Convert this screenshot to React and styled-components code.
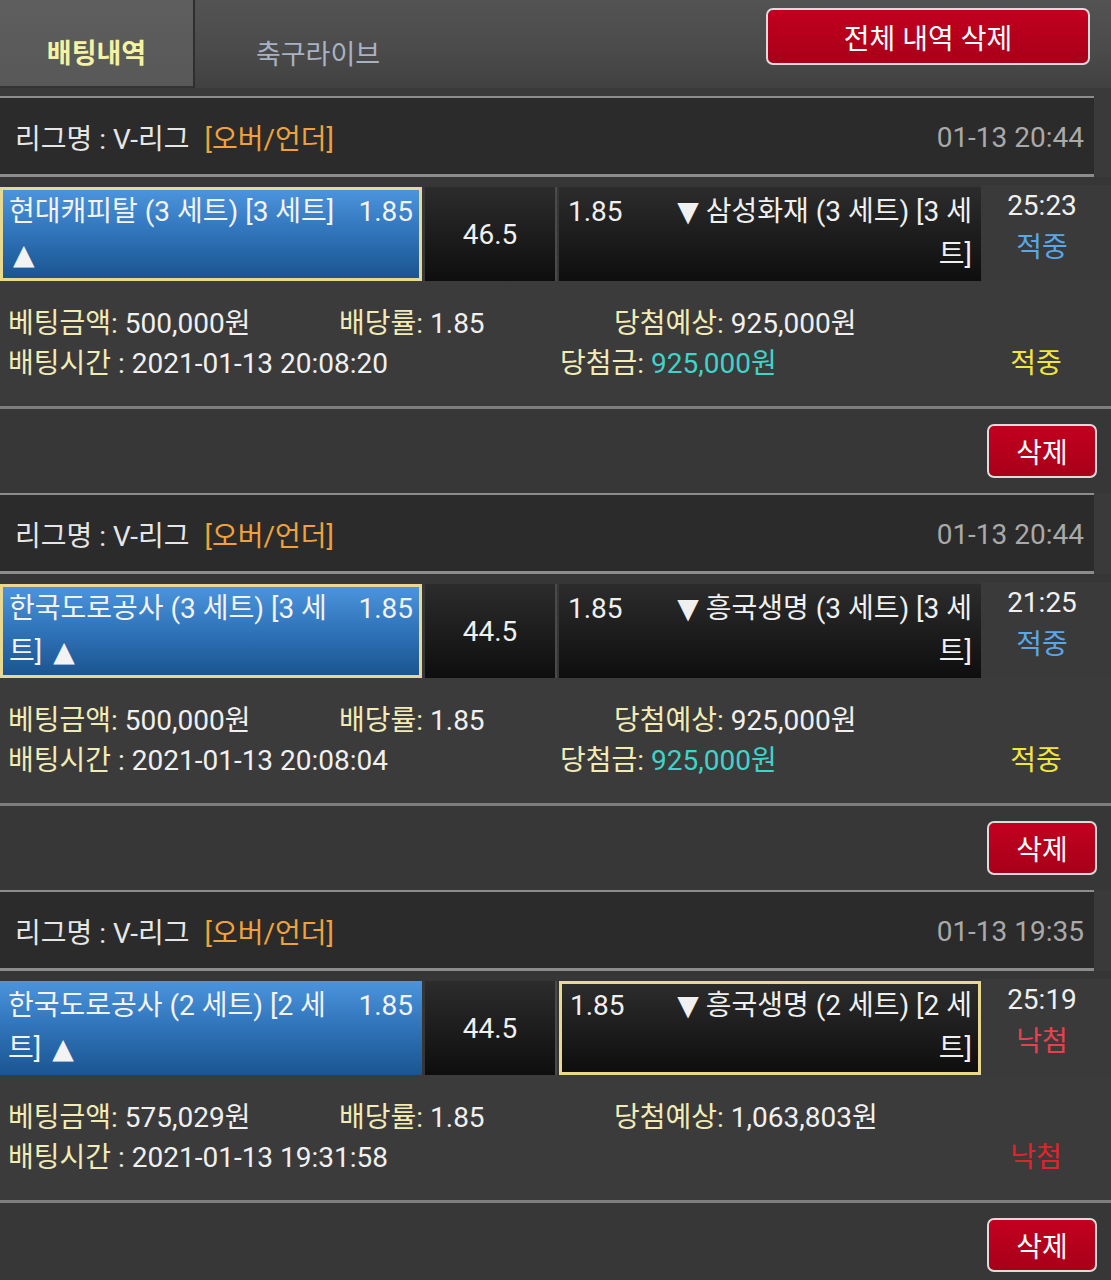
import React from 'react';
import styled, { createGlobalStyle } from 'styled-components';

const GlobalStyle = createGlobalStyle`
  html, body { margin: 0; padding: 0; background: #3a3a3a; }
  body { font-family: Roboto, "Noto Sans CJK KR", sans-serif; }
  * { box-sizing: border-box; }
`;

const Page = styled.div`
  width: 1111px;
  min-height: 1280px;
  background: #3a3a3a;
  overflow: hidden;
`;

const TabBar = styled.div`
  height: 88px;
  display: flex;
  align-items: stretch;
  background: linear-gradient(#535353, #4b4b4b 55%, #414141);
  margin-bottom: 8px;
`;

const Tab = styled.div`
  width: ${p => p.$w}px;
  display: flex;
  align-items: center;
  justify-content: center;
  padding-top: 16px;
  font-size: 27px;
  font-weight: ${p => (p.$active ? 700 : 400)};
  color: ${p => (p.$active ? '#f4f3a2' : '#a9b2c2')};
  background: ${p => (p.$active ? 'linear-gradient(#5e5e5e, #585858)' : 'transparent')};
  border-right: ${p => (p.$active ? '2px solid #2f2f2f' : '0')};
  border-bottom: ${p => (p.$active ? '2px solid #333' : '0')};
`;

const ClearAll = styled.button`
  margin: 8px 21px 0 auto;
  width: 324px;
  height: 57px;
  border: 2px solid #dcdcdc;
  border-radius: 7px;
  background: linear-gradient(#c2001f, #a80019);
  color: #fff;
  font-family: inherit;
  font-size: 28px;
  padding: 0;
`;

const Header = styled.div`
  width: 1094px;
  height: 81px;
  border-top: 2px solid #8c8c8c;
  border-bottom: 3px solid #8c8c8c;
  background: #2b2b2b;
  display: flex;
  align-items: center;
  padding: 2px 10px 0 15px;
  font-size: 28px;
  color: #e6e6e6;
`;

const Tag = styled.span`
  color: #f0a23a;
  margin-left: 15px;
`;

const DateText = styled.span`
  margin-left: auto;
  color: #a9a9a9;
`;

const MatchRow = styled.div`
  display: flex;
  padding-top: 10px;
  background: #363636;
  height: 104px;
`;

const HomeBox = styled.div`
  width: 422px;
  height: 94px;
  display: flex;
  border: ${p => (p.$sel ? '3px solid #e9d98f' : '0')};
  padding: ${p => (p.$sel ? '0 6px 0 6px' : '3px 9px 0 8px')};
  background: linear-gradient(#4b94dd, #2f73b8 50%, #1b5591);
  color: #f3f3f3;
  font-size: 28px;
  line-height: 43px;
`;

const HomeName = styled.div`
  flex: 1;
  min-width: 0;
`;

const Arrow = styled.span`
  font-family: "DejaVu Sans", sans-serif;
  font-size: 28px;
  margin: ${p => (p.$up ? '0 0 0 4px' : '0')};
`;

const Odds = styled.div`
  flex: none;
  margin-left: 4px;
`;

const LineBox = styled.div`
  width: 132px;
  height: 94px;
  margin-left: 3px;
  border-right: 2px solid #4a4a4a;
  background: linear-gradient(#2c2c2c, #0e0e0e);
  display: flex;
  align-items: center;
  justify-content: center;
  color: #f0f0f0;
  font-size: 28px;
`;

const AwayBox = styled.div`
  width: 422px;
  height: 94px;
  margin-left: 2px;
  display: flex;
  border: ${p => (p.$sel ? '3px solid #e9d98f' : '0')};
  padding: ${p => (p.$sel ? '0 6px 0 8px' : '3px 9px 0 9px')};
  background: linear-gradient(#2c2c2c, #0e0e0e);
  color: #f0f0f0;
  font-size: 28px;
  line-height: 43px;
`;

const AwayOdds = styled.div`
  flex: none;
`;

const AwayName = styled.div`
  margin-left: auto;
  width: 318px;
  text-align: right;
`;

const ResultCol = styled.div`
  flex: 1;
  display: flex;
  flex-direction: column;
  align-items: center;
  padding-right: 8px;
  margin-top: -2px;
  font-size: 28px;
  line-height: 42px;
  background: #3a3a3a;
  color: #f0f0f0;
`;

const ResultTag = styled.span`
  color: ${p => (p.$win ? '#5aa6e6' : '#e8404e')};
`;

const Info = styled.div`
  height: 125px;
  padding: 20px 11px 0 8px;
  background: #3b3b3b;
  font-size: 28px;
`;

const InfoRow = styled.div`
  display: flex;
  align-items: center;
  height: 40px;
  white-space: nowrap;
`;

const Cell = styled.div`
  flex: ${p => (p.$w ? `0 0 ${p.$w}px` : '1')};
  text-align: ${p => p.$center ? 'center' : 'left'};
`;

const Label = styled.span`
  color: #f2ecb4;
`;

const Value = styled.span`
  color: ${p => p.$prize ? '#3fd3c9' : '#f0f0f0'};
`;

const Status = styled.span`
  color: ${p => (p.$win ? '#f2e63c' : '#e0242c')};
`;

const ActionBar = styled.div`
  height: 87px;
  border-top: 3px solid #7e7e7e;
  background: #373737;
  display: flex;
  justify-content: flex-end;
  padding: 15px 14px 0 0;
`;

const DeleteBtn = styled.button`
  width: 110px;
  height: 54px;
  border: 2px solid #dcdcdc;
  border-radius: 7px;
  background: linear-gradient(#c2001f, #a80019);
  color: #fff;
  font-family: inherit;
  font-size: 28px;
  padding: 0;
`;

const bets = [
  {
    date: '01-13 20:44', home: '현대캐피탈 (3 세트) [3 세트]', line: '46.5',
    away: '삼성화재 (3 세트) [3 세트]', pick: 'home', score: '25:23', win: true,
    amount: '500,000원', rate: '1.85', expected: '925,000원',
    time: '2021-01-13 20:08:20', prize: '925,000원',
  },
  {
    date: '01-13 20:44', home: '한국도로공사 (3 세트) [3 세트]', line: '44.5',
    away: '흥국생명 (3 세트) [3 세트]', pick: 'home', score: '21:25', win: true,
    amount: '500,000원', rate: '1.85', expected: '925,000원',
    time: '2021-01-13 20:08:04', prize: '925,000원',
  },
  {
    date: '01-13 19:35', home: '한국도로공사 (2 세트) [2 세트]', line: '44.5',
    away: '흥국생명 (2 세트) [2 세트]', pick: 'away', score: '25:19', win: false,
    amount: '575,029원', rate: '1.85', expected: '1,063,803원',
    time: '2021-01-13 19:31:58', prize: null,
  },
];

function BetCard({ b }) {
  return (
    <section>
      <Header>
        리그명 : V-리그<Tag>[오버/언더]</Tag>
        <DateText>{b.date}</DateText>
      </Header>
      <MatchRow>
        <HomeBox $sel={b.pick === 'home'}>
          <HomeName>{b.home} <Arrow $up>▲</Arrow></HomeName>
          <Odds>1.85</Odds>
        </HomeBox>
        <LineBox>{b.line}</LineBox>
        <AwayBox $sel={b.pick === 'away'}>
          <AwayOdds>1.85</AwayOdds>
          <AwayName><Arrow>▼</Arrow> {b.away}</AwayName>
        </AwayBox>
        <ResultCol>
          <span>{b.score}</span>
          <ResultTag $win={b.win}>{b.win ? '적중' : '낙첨'}</ResultTag>
        </ResultCol>
      </MatchRow>
      <Info>
        <InfoRow>
          <Cell $w={331}><Label>베팅금액:</Label> <Value>{b.amount}</Value></Cell>
          <Cell $w={275}><Label>배당률:</Label> <Value>{b.rate}</Value></Cell>
          <Cell><Label>당첨예상:</Label> <Value>{b.expected}</Value></Cell>
        </InfoRow>
        <InfoRow>
          <Cell $w={552}><Label>배팅시간</Label> <Value>: {b.time}</Value></Cell>
          <Cell>{b.prize && (<><Label>당첨금:</Label> <Value $prize>{b.prize}</Value></>)}</Cell>
          <Cell $w={128} $center><Status $win={b.win}>{b.win ? '적중' : '낙첨'}</Status></Cell>
        </InfoRow>
      </Info>
      <ActionBar>
        <DeleteBtn>삭제</DeleteBtn>
      </ActionBar>
    </section>
  );
}

export default function App() {
  return (
    <Page>
      <GlobalStyle />
      <TabBar>
        <Tab $w={195} $active>배팅내역</Tab>
        <Tab $w={246}>축구라이브</Tab>
        <ClearAll>전체 내역 삭제</ClearAll>
      </TabBar>
      {bets.map((b, i) => <BetCard key={i} b={b} />)}
    </Page>
  );
}
